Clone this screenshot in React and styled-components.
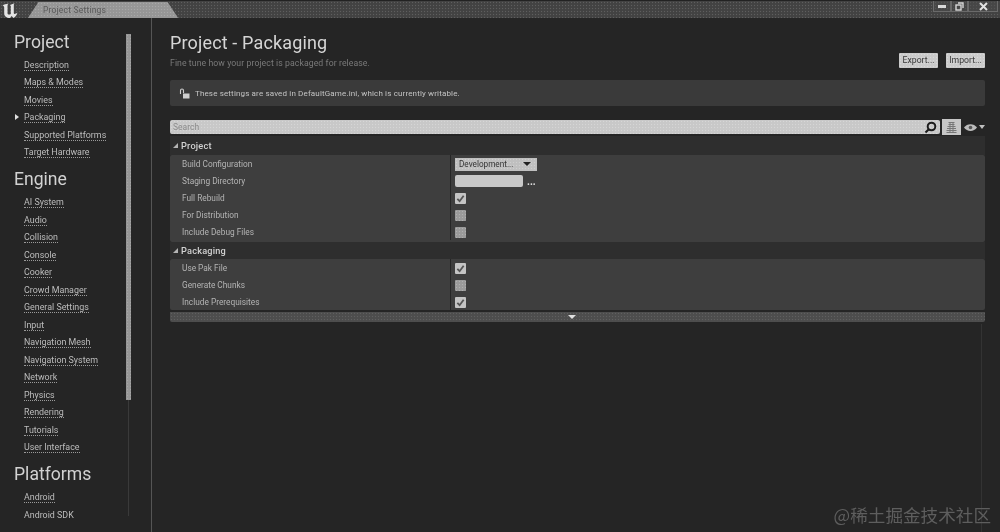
import React from 'react'
import styled, { createGlobalStyle } from 'styled-components'

const dither = (a, b) => `
    background-color: ${a};
    background-image:
        radial-gradient(circle, ${b} 0.8px, transparent 1.1px),
        radial-gradient(circle, ${b} 0.8px, transparent 1.1px);
    background-size: 3px 3px;
    background-position: 0 0, 1.5px 1.5px;
`

const Global = createGlobalStyle`
    html, body { margin: 0; padding: 0; background: #252525; }
    * { box-sizing: border-box; }
    body { font-family: Roboto, "Liberation Sans", sans-serif; }
`

const Page = styled.div`
    position: relative;
    width: 1000px;
    height: 532px;
    overflow: hidden;
    display: flex;
    flex-direction: column;
    background: #252525;
    color: #c8c8c8;
    filter: blur(0.35px);
`

const TitleBar = styled.div`
    height: 18px;
    flex: none;
    display: flex;
    align-items: flex-end;
    padding-left: 2px;
    ${dither('#2e2e2e', '#5e5e5e')}
    border-top: 1px solid #222;
`

const Logo = styled.svg`
    width: 16px;
    height: 15px;
    flex: none;
`

const Tab = styled.div`
    width: 150px;
    height: 16px;
    margin-left: 10px;
    padding: 1px 0 0 15px;
    font-size: 8.5px;
    line-height: 14px;
    letter-spacing: 0.2px;
    color: #5a5a5a;
    clip-path: polygon(0 100%, 7% 0, 93% 0, 100% 100%);
    ${dither('#8a8a8a', '#a8a8a8')}
`

const WindowButtons = styled.div`
    margin-left: auto;
    margin-right: 2px;
    align-self: flex-start;
    display: flex;
`

const WindowButton = styled.div`
    width: ${p => p.$w}px;
    height: 11px;
    display: flex;
    align-items: center;
    justify-content: center;
    border: 1px solid #6a6a6a;
    border-top: none;
    ${dither('#3c3c3c', '#555')}
`

const Body = styled.div`
    flex: 1;
    display: flex;
    min-height: 0;
`

const Sidebar = styled.nav`
    position: relative;
    width: 152px;
    flex: none;
    padding: 13.5px 0 0 14px;
    overflow: hidden;
    border-right: 1px solid #555;
`

const Thumb = styled.div`
    position: absolute;
    left: 126px;
    top: 16px;
    width: 5px;
    height: 366px;
    ${dither('#8a8a8a', '#a6a6a6')}
`

const Track = styled.div`
    position: absolute;
    left: 128px;
    top: 382px;
    width: 1px;
    bottom: 16px;
    background: #3a3a3a;
`

const Group = styled.h2`
    margin: 0 0 5px;
    font-size: 17.6px;
    font-weight: 400;
    line-height: 21px;
    color: #d2d2d2;
`

const Items = styled.ul`
    list-style: none;
    margin: 0 0 6.5px;
    padding: 0;
`

const Item = styled.li`
    position: relative;
    height: 17.5px;
    padding-left: 10px;
    font-size: 8.9px;
    line-height: 14px;
    color: #bdbdbd;

    span {
        display: inline-block;
        height: 13px;
        border-bottom: ${p => (p.$plain ? 'none' : '1px dotted #9a9a9a')};
    }

    ${p => p.$active && `
        &::before {
            content: '';
            position: absolute;
            left: 1px;
            top: 4px;
            border-left: 4px solid #e0e0e0;
            border-top: 3px solid transparent;
            border-bottom: 3px solid transparent;
        }
    `}
`

const Main = styled.main`
    flex: 1;
    padding: 14px 15px 0 18px;
    position: relative;
    min-width: 0;
`

const Heading = styled.div`
    display: flex;
    justify-content: space-between;
    align-items: flex-start;
    height: 48px;
`

const Title = styled.h1`
    margin: 0;
    font-size: 18px;
    font-weight: 400;
    line-height: 21px;
    color: #d6d6d6;
    letter-spacing: 0.15px;
`

const Subtitle = styled.p`
    margin: 4px 0 0;
    font-size: 8.7px;
    line-height: 12px;
    color: #7a7a7a;
    letter-spacing: 0.08px;
`

const Actions = styled.div`
    display: flex;
    gap: 8px;
    margin-top: 21px;
`

const Button = styled.button`
    width: 39px;
    height: 15px;
    padding: 0;
    border: none;
    border-radius: 1px;
    font: 8.7px/15px Roboto, sans-serif;
    color: #3a3a3a;
    ${dither('#c0c0c0', '#d8d8d8')}
`

const Notice = styled.div`
    height: 26px;
    display: flex;
    align-items: center;
    gap: 5px;
    padding-left: 9px;
    background: #3a3a3a;
    border-radius: 2px;
    font-size: 8px;
    letter-spacing: 0.15px;
    color: #c4c4c4;
`

const SearchRow = styled.div`
    display: flex;
    align-items: center;
    height: 16px;
    margin-top: 13px;
`

const SearchBox = styled.div`
    flex: 1;
    height: 14px;
    display: flex;
    align-items: center;
    justify-content: space-between;
    padding: 0 3px;
    font-size: 8.5px;
    color: #8c8c8c;
    border-radius: 2px;
    ${dither('#bdbdbd', '#d6d6d6')}
`

const GridButton = styled.div`
    width: 19px;
    height: 16px;
    margin-left: 2px;
    display: flex;
    align-items: center;
    justify-content: center;
    background: #c6c6c6;
`

const ViewMenu = styled.div`
    width: 24px;
    display: flex;
    align-items: center;
    justify-content: flex-end;
    gap: 2px;
`

const Table = styled.div`
    margin-top: 1px;
`

const Section = styled.div`
    height: ${p => p.$h}px;
    display: flex;
    align-items: center;
    padding-left: 3px;
    gap: 3px;
    background: #2e2e2e;
    font-size: 9.2px;
    font-weight: 500;
    letter-spacing: 0.2px;
    color: #d2d2d2;
`

const Caret = styled.i`
    width: 0;
    height: 0;
    border-left: 5px solid transparent;
    border-bottom: 5px solid #b4b4b4;
`

const Rows = styled.div`
    background: #3e3e3e;
    padding-bottom: ${p => p.$pad || 0}px;
    border-radius: 2px;
`

const Row = styled.div`
    height: 17px;
    display: grid;
    grid-template-columns: 280px 1fr;
    align-items: center;
`

const Label = styled.div`
    padding-left: 12px;
    font-size: 8.3px;
    color: #b4b4b4;
`

const Value = styled.div`
    height: 100%;
    display: flex;
    align-items: center;
    gap: 4px;
    padding: 1px 0 0 4px;
    border-left: 1px solid #262626;
`

const Select = styled.div`
    width: 82px;
    height: 13px;
    display: flex;
    align-items: center;
    justify-content: space-between;
    padding: 0 4px;
    font-size: 8.2px;
    color: #333;
    ${dither('#b4b4b4', '#cecece')}
`

const SelectArrow = styled.i`
    margin-right: 2px;
    border-left: 4px solid transparent;
    border-right: 4px solid transparent;
    border-top: 4px solid #222;
`

const TextInput = styled.div`
    width: 68px;
    height: 12px;
    background: #c8c8c8;
    border-radius: 2px;
`

const Dots = styled.span`
    margin-top: 2px;
    font-size: 10px;
    font-weight: 700;
    line-height: 8px;
    color: #e0e0e0;
`

const Check = styled.div`
    width: 11px;
    height: 11px;
    display: flex;
    align-items: center;
    justify-content: center;
    border-radius: 1px;
    ${p => (p.$on ? 'background: #c4c4c4;' : dither('#8a8a8a', '#b0b0b0'))}
`

const Footer = styled.div`
    position: relative;
    height: 10px;
    margin-top: 2px;
    border-radius: 0 0 2px 2px;
    ${dither('#404040', '#606060')}

    &::after {
        content: '';
        position: absolute;
        left: 398px;
        top: 3px;
        border-left: 4px solid transparent;
        border-right: 4px solid transparent;
        border-top: 4px solid #e0e0e0;
    }
`

const EdgeLine = styled.div`
    position: absolute;
    right: 18px;
    top: 306px;
    bottom: 0;
    width: 1px;
    background: #333;
`

const Watermark = styled.div`
    position: absolute;
    right: 9px;
    bottom: 6px;
    font-family: "Noto Sans CJK SC", "Liberation Sans", sans-serif;
    font-size: 17.6px;
    line-height: 22px;
    color: #5e5e5e;
`

const CheckMark = () => (
    <svg width="9" height="9" viewBox="0 0 10 10">
        <path d="M1.5 5.5 L4 8 L8.5 2" fill="none" stroke="#555" strokeWidth="2" />
    </svg>
)

const nav = [
    { name: 'Project', items: ['Description', 'Maps & Modes', 'Movies', 'Packaging', 'Supported Platforms', 'Target Hardware'] },
    { name: 'Engine', items: ['AI System', 'Audio', 'Collision', 'Console', 'Cooker', 'Crowd Manager', 'General Settings', 'Input', 'Navigation Mesh', 'Navigation System', 'Network', 'Physics', 'Rendering', 'Tutorials', 'User Interface'] },
    { name: 'Platforms', items: ['Android', 'Android SDK'] },
]

export default function App() {
    return (
        <Page>
            <Global />
            <TitleBar>
                <Logo viewBox="0 0 16 15">
                    <path d="M0.5 2.5 C2 1.5 4 1 6.5 0.5 L5.5 2 V10 C5.5 11.8 7.5 12 8.8 11 V3 L8 2 L12.5 0.3 L11.8 1.5 V10 C11.8 11.5 13.5 11.2 15.5 9.5 C14.8 12 13.5 14 11.5 15 L9.6 13 L8 15 C4.5 15 2.2 13.5 2.2 10 V4.5 C2.2 3.5 1.5 2.8 0.5 2.5 Z" fill="#e4e4e4" />
                </Logo>
                <Tab>Project Settings</Tab>
                <WindowButtons>
                    <WindowButton $w={18}>
                        <svg width="8" height="3"><rect width="8" height="3" fill="#d8d8d8" /></svg>
                    </WindowButton>
                    <WindowButton $w={17}>
                        <svg width="9" height="9" viewBox="0 0 9 9" fill="none" stroke="#d8d8d8" strokeWidth="1.4">
                            <rect x="1" y="3" width="5" height="5" />
                            <path d="M3 1 H8 V6" />
                        </svg>
                    </WindowButton>
                    <WindowButton $w={30}>
                        <svg width="9" height="9" viewBox="0 0 9 9" stroke="#e2e2e2" strokeWidth="2">
                            <path d="M1 1 L8 8 M8 1 L1 8" />
                        </svg>
                    </WindowButton>
                </WindowButtons>
            </TitleBar>
            <Body>
                <Sidebar>
                    <Thumb />
                    <Track />
                    {nav.map(group => (
                        <div key={group.name}>
                            <Group>{group.name}</Group>
                            <Items>
                                {group.items.map(item => (
                                    <Item key={item} $active={item === 'Packaging'} $plain={item === 'Android SDK'}>
                                        <span>{item}</span>
                                    </Item>
                                ))}
                            </Items>
                        </div>
                    ))}
                </Sidebar>
                <Main>
                    <Heading>
                        <div>
                            <Title>Project - Packaging</Title>
                            <Subtitle>Fine tune how your project is packaged for release.</Subtitle>
                        </div>
                        <Actions>
                            <Button>Export...</Button>
                            <Button>Import...</Button>
                        </Actions>
                    </Heading>
                    <Notice>
                        <svg width="11" height="11" viewBox="0 0 11 11">
                            <path d="M1.5 6 V2.5 C1.5 0.5 4.5 0.5 4.5 2.5 V5" fill="none" stroke="#d0d0d0" strokeWidth="1.1" />
                            <rect x="4" y="5.5" width="6.5" height="5" fill="#d0d0d0" />
                        </svg>
                        These settings are saved in DefaultGame.ini, which is currently writable.
                    </Notice>
                    <SearchRow>
                        <SearchBox>
                            Search
                            <svg width="13" height="13" viewBox="0 0 13 13" fill="none" stroke="#1c1c1c" strokeWidth="2">
                                <circle cx="7.5" cy="5.5" r="3.8" />
                                <path d="M4.8 8.2 L1.5 11.5" />
                            </svg>
                        </SearchBox>
                        <GridButton>
                            <svg width="11" height="11" viewBox="0 0 11 11" stroke="#777" strokeWidth="1">
                                <path d="M2.5 .5 H8.5 M2.5 2.5 H8.5 M1.5 4.5 H9.5 M1 6.5 H10 M.5 8.5 H10.5 M.5 10.5 H10.5 M4 .5 V10.5 M7 .5 V10.5" />
                            </svg>
                        </GridButton>
                        <ViewMenu>
                            <svg width="13" height="9" viewBox="0 0 13 9">
                                <path d="M0 4.5 C3 0 10 0 13 4.5 C10 9 3 9 0 4.5 Z" fill="#bcbcbc" />
                                <circle cx="6.5" cy="4.5" r="1.8" fill="#555" />
                            </svg>
                            <svg width="6" height="4"><path d="M0 0 H6 L3 4 Z" fill="#c0c0c0" /></svg>
                        </ViewMenu>
                    </SearchRow>
                    <Table>
                        <Section $h={19}><Caret />Project</Section>
                        <Rows $pad={2}>
                            <Row>
                                <Label>Build Configuration</Label>
                                <Value>
                                    <Select>Development...<SelectArrow /></Select>
                                </Value>
                            </Row>
                            <Row>
                                <Label>Staging Directory</Label>
                                <Value>
                                    <TextInput />
                                    <Dots>...</Dots>
                                </Value>
                            </Row>
                            <Row><Label>Full Rebuild</Label><Value><Check $on><CheckMark /></Check></Value></Row>
                            <Row><Label>For Distribution</Label><Value><Check /></Value></Row>
                            <Row><Label>Include Debug Files</Label><Value><Check /></Value></Row>
                        </Rows>
                        <Section $h={17}><Caret />Packaging</Section>
                        <Rows>
                            <Row><Label>Use Pak File</Label><Value><Check $on><CheckMark /></Check></Value></Row>
                            <Row><Label>Generate Chunks</Label><Value><Check /></Value></Row>
                            <Row><Label>Include Prerequisites</Label><Value><Check $on><CheckMark /></Check></Value></Row>
                        </Rows>
                        <Footer />
                    </Table>
                    <EdgeLine />
                </Main>
            </Body>
            <Watermark>@稀土掘金技术社区</Watermark>
        </Page>
    )
}
